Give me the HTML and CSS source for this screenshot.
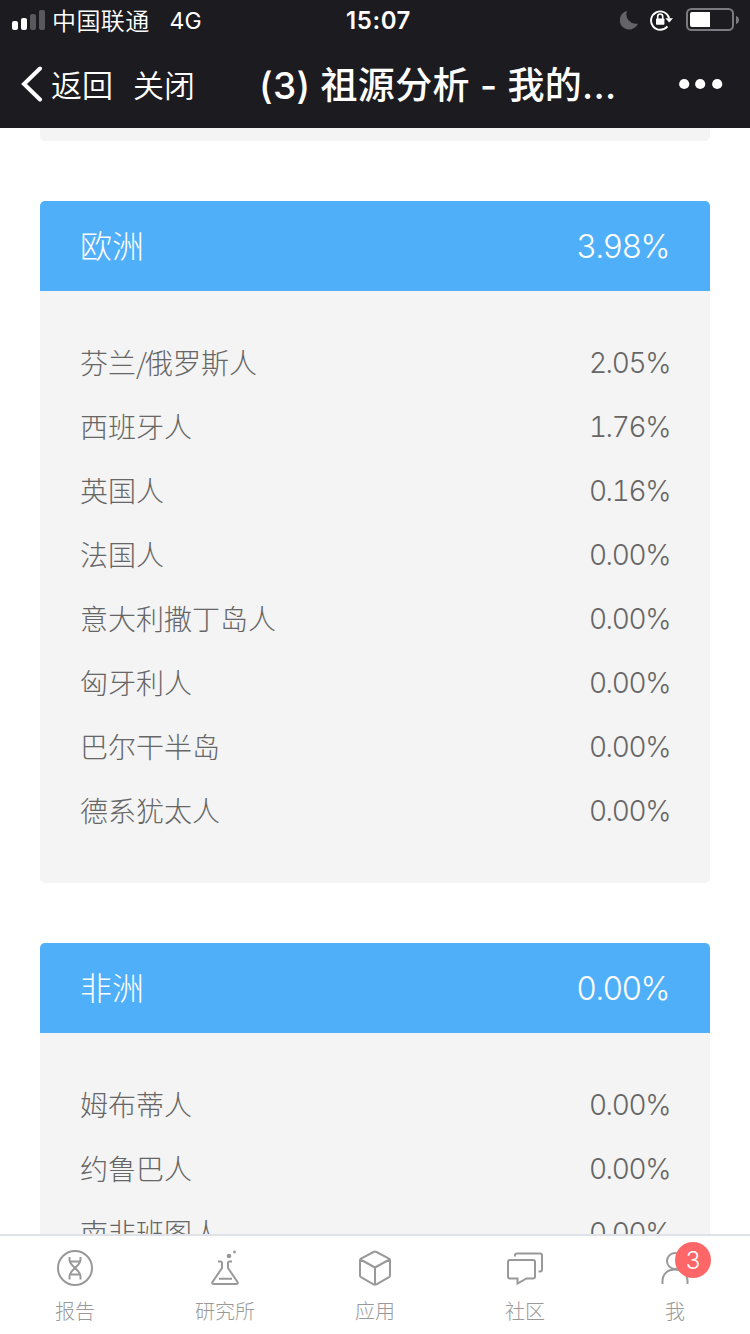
FILE: index.html
```html
<!DOCTYPE html>
<html lang="zh-CN">
<head>
    <meta charset="UTF-8">
    <meta name="viewport" content="width=device-width, initial-scale=1.0">
    <title>(3) 祖源分析 - 我的</title>
    <link rel="stylesheet" href="styles.css">
</head>
<body>
    <header class="top">
        <div class="status-bar">
            <div class="status-left">
                <svg class="signal" width="34" height="20" viewBox="0 0 34 20">
                    <rect x="0" y="11" width="6" height="9" rx="2" fill="#fff"/>
                    <rect x="9" y="8" width="6" height="12" rx="2" fill="#fff"/>
                    <rect x="18" y="4" width="6" height="16" rx="2" fill="#59585c"/>
                    <rect x="27" y="0" width="6" height="20" rx="2" fill="#59585c"/>
                </svg>
                <span class="carrier">中国联通</span>
                <span class="network">4G</span>
            </div>
            <div class="status-time">15:07</div>
            <div class="status-right">
                <svg width="19" height="20" viewBox="0 0 19 20">
                    <path d="M7 1A9.4 9.4 0 1 0 18 13.4A9.4 9.4 0 0 1 7 1Z" fill="#646367"/>
                </svg>
                <svg class="lock" width="24" height="22" viewBox="0 0 24 22">
                    <path d="M17.4 17.4A9.2 9.2 0 1 1 19.2 9.4" fill="none" stroke="#fff" stroke-width="1.9"/>
                    <path d="M15.4 9.2H23L19.2 13.4Z" fill="#fff"/>
                    <rect x="6" y="9.5" width="8.4" height="6.2" rx="0.8" fill="#fff"/>
                    <path d="M7.7 10V7.5a2.5 2.5 0 0 1 5 0V10" fill="none" stroke="#fff" stroke-width="1.6"/>
                </svg>
                <svg class="battery" width="54" height="24" viewBox="0 0 54 24">
                    <rect x="1" y="1" width="46" height="21" rx="4.5" fill="none" stroke="#7b7a7e" stroke-width="2"/>
                    <path d="M6 4H24V19H6a2 2 0 0 1-2-2V6a2 2 0 0 1 2-2Z" fill="#fff"/>
                    <path d="M50 8C54 9 54 15 50 16Z" fill="#7b7a7e"/>
                </svg>
            </div>
        </div>
        <nav class="nav-bar">
            <svg class="back-arrow" width="22" height="36" viewBox="0 0 22 36">
                <path d="M19 2.5L3 18L19 33.5" fill="none" stroke="#fff" stroke-width="4" stroke-linecap="round"/>
            </svg>
            <span class="nav-link">返回</span>
            <span class="nav-link nav-close">关闭</span>
            <h1 class="nav-title">(3) 祖源分析 - 我的...</h1>
            <svg class="more" width="44" height="12" viewBox="0 0 44 12">
                <circle cx="5.2" cy="6" r="5.1" fill="#fff"/>
                <circle cx="21.2" cy="6" r="5.1" fill="#fff"/>
                <circle cx="38.2" cy="6" r="5.1" fill="#fff"/>
            </svg>
        </nav>
    </header>

    <main class="content">
        <section class="card card-tail"></section>

        <section class="card">
            <div class="card-header"><span>欧洲</span><span class="percent">3.98%</span></div>
            <ul class="card-list">
                <li><span>芬兰<span class="slash">/</span>俄罗斯人</span><span class="percent">2.05%</span></li>
                <li><span>西班牙人</span><span class="percent">1.76%</span></li>
                <li><span>英国人</span><span class="percent">0.16%</span></li>
                <li><span>法国人</span><span class="percent">0.00%</span></li>
                <li><span>意大利撒丁岛人</span><span class="percent">0.00%</span></li>
                <li><span>匈牙利人</span><span class="percent">0.00%</span></li>
                <li><span>巴尔干半岛</span><span class="percent">0.00%</span></li>
                <li><span>德系犹太人</span><span class="percent">0.00%</span></li>
            </ul>
        </section>

        <section class="card">
            <div class="card-header"><span>非洲</span><span class="percent">0.00%</span></div>
            <ul class="card-list">
                <li><span>姆布蒂人</span><span class="percent">0.00%</span></li>
                <li><span>约鲁巴人</span><span class="percent">0.00%</span></li>
                <li><span>南非班图人</span><span class="percent">0.00%</span></li>
            </ul>
        </section>
    </main>

    <footer class="tab-bar">
        <div class="tab">
            <svg class="tab-icon" viewBox="0 0 40 40">
                <circle cx="20" cy="20" r="17"/>
                <path d="M14.5 9V12C14.5 18 25.5 22 25.5 28V31.5M25.5 9V12C25.5 18 14.5 22 14.5 28V31.5M14.5 13.5H25.5M14.5 26.5H25.5"/>
            </svg>
            <span>报告</span>
        </div>
        <div class="tab">
            <svg class="tab-icon" viewBox="0 0 40 40">
                <path d="M13 13.5H15.5Q17 13.5 17 15V20L7.5 34Q6.5 36 9 36H31Q33.5 36 32.5 34L23 20V15Q23 13.5 24.5 13.5H27M14 30.8H27"/>
                <circle class="dot" cx="24" cy="8" r="2.3"/>
                <circle class="dot" cx="29.5" cy="4" r="1.4"/>
            </svg>
            <span>研究所</span>
        </div>
        <div class="tab">
            <svg class="tab-icon" viewBox="0 0 40 40">
                <path d="M18.5 4Q20 3.2 21.5 4L34 10.7Q35 11.3 35 12.5V27.5Q35 28.6 34 29.2L21.5 36.3Q20 37 18.5 36.3L6 29.2Q5 28.6 5 27.5V12.5Q5 11.3 6 10.7ZM5.5 11.5L20 19.5L34.5 11.5M20 19.5V36.5"/>
            </svg>
            <span>应用</span>
        </div>
        <div class="tab">
            <svg class="tab-icon" viewBox="0 0 40 40">
                <path d="M5 12H28Q30 12 30 14V28.5Q30 30.5 28 30.5H21.5L12.5 35.5V30.5H5Q3 30.5 3 28.5V14Q3 12 5 12M10 8.5V7.5Q10 5.5 12 5.5H35Q37 5.5 37 7.5V21.5Q37 23.5 35 23.5H33.5"/>
            </svg>
            <span>社区</span>
        </div>
        <div class="tab">
            <svg class="tab-icon" viewBox="0 0 40 40">
                <circle cx="20" cy="13" r="8"/>
                <path d="M7.5 36V33.5C7.5 25.5 13 21.5 20 21.5S32.5 25.5 32.5 33.5V36"/>
            </svg>
            <span class="badge">3</span>
            <span>我</span>
        </div>
    </footer>
</body>
</html>
```
FILE: styles.css
```css
* {
    box-sizing: border-box;
}
body {
    margin: 0;
    height: 1334px;
    display: flex;
    flex-direction: column;
    overflow: hidden;
    background-color: #fff;
    font-family: "Noto Sans CJK SC", sans-serif;
}
.top {
    flex: none;
    height: 128px;
    background-color: #1c1b20;
    color: #fff;
}

/* Status bar */
.status-bar {
    height: 40px;
    display: grid;
    grid-template-columns: 1fr auto 1fr;
    align-items: center;
    padding: 0 10px 0 12px;
    font-size: 24px;
    line-height: 38px;
}
.status-left,
.status-right {
    display: flex;
    align-items: center;
}
.status-right {
    justify-content: flex-end;
}
.carrier {
    margin-left: 6px;
    font-weight: 350;
    letter-spacing: 0.4px;
}
.network {
    margin-left: 20px;
    padding-top: 2px;
    font-family: Inter, sans-serif;
    font-size: 23px;
}
.status-time {
    padding: 2px 0 0 5px;
    font-family: Inter, sans-serif;
    font-size: 24px;
    font-weight: 600;
    letter-spacing: 0.6px;
}
.lock {
    margin-left: 11px;
}
.battery {
    margin-left: 12px;
}

/* Navigation bar */
.nav-bar {
    height: 88px;
    display: flex;
    align-items: center;
    padding: 0 27px 0 21px;
}
.nav-link {
    margin-left: 8px;
    padding-bottom: 2px;
    font-size: 31px;
    font-weight: 350;
}
.nav-close {
    margin-left: 20px;
}
.nav-title {
    margin: 0 0 0 64px;
    padding-bottom: 3px;
    font-family: Inter, "Noto Sans CJK SC", sans-serif;
    font-size: 37px;
    font-weight: 500;
    letter-spacing: 0.3px;
    white-space: nowrap;
}
.more {
    margin-left: auto;
}

/* Result cards */
.content {
    flex: 1;
    min-height: 0;
    overflow: hidden;
    padding: 0 40px;
}
.card {
    margin-bottom: 60px;
    border-radius: 5px;
    background-color: #f4f4f4;
    overflow: hidden;
}
.card-tail {
    height: 13px;
    border-radius: 0 0 5px 5px;
}
.card-header {
    display: flex;
    justify-content: space-between;
    height: 90px;
    padding: 0 40px;
    background-color: #4fb0f9;
    color: #fff;
    font-size: 32px;
    font-weight: 300;
    line-height: 87px;
}
.card-list {
    list-style: none;
    margin: 0;
    padding: 40px;
    color: #666;
    font-size: 28px;
    font-weight: 300;
}
.card-list li {
    display: flex;
    justify-content: space-between;
    height: 64px;
    line-height: 62px;
}
.slash {
    letter-spacing: -2px;
}
.percent {
    font-family: Inter, sans-serif;
    font-weight: 300;
    font-variant-numeric: tabular-nums;
    letter-spacing: -0.05em;
    line-height: 65px;
}
.card-header .percent {
    margin-right: 1px;
    line-height: 91px;
}

/* Bottom tabs */
.tab-bar {
    flex: none;
    display: flex;
    height: 100px;
    border-top: 2px solid #dfe3e8;
    background-color: #fff;
    color: #999;
    font-size: 20px;
    font-weight: 300;
}
.tab {
    position: relative;
    flex: 1;
    display: flex;
    flex-direction: column;
    align-items: center;
    padding-top: 12px;
    line-height: 30px;
}
.tab-icon {
    width: 40px;
    height: 40px;
    margin-bottom: 8px;
    fill: none;
    stroke: #999;
    stroke-width: 2;
}
.tab-icon .dot {
    fill: #999;
    stroke: none;
}
.badge {
    position: absolute;
    top: 6px;
    left: 75px;
    width: 36px;
    height: 36px;
    border-radius: 50%;
    background-color: #ff6667;
    color: #fff;
    font-family: Inter, sans-serif;
    font-size: 24px;
    font-weight: 300;
    line-height: 37px;
    text-align: center;
}
```
